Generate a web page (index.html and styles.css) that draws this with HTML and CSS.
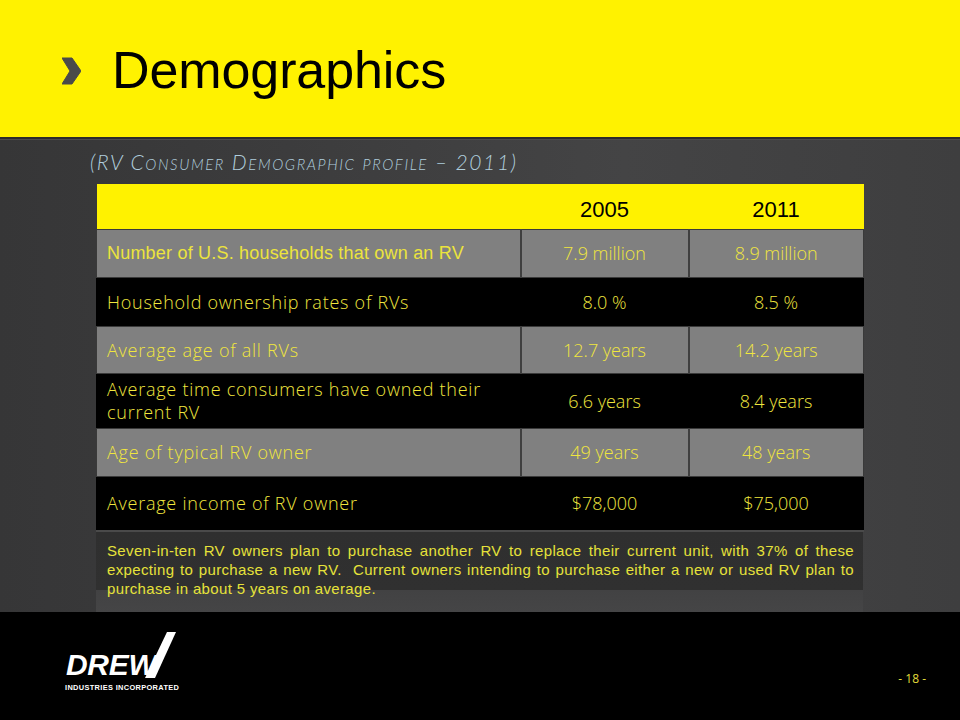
FILE: index.html
```html
<!DOCTYPE html>
<html lang="en">
<head>
<meta charset="utf-8">
<title>Demographics</title>
<link rel="stylesheet" href="styles.css">
</head>
<body>
<div class="slide">
  <header class="top">
    <svg class="chevron" width="19" height="28" viewBox="0 0 19 28" aria-hidden="true">
      <polygon points="0,1 10,1 19,14 10,27 0,27 8,14" fill="#4a4a4a" stroke="#4a4a4a" stroke-width="1" stroke-linejoin="round"/>
    </svg>
    <h1 class="title">Demographics</h1>
  </header>
  <main class="middle">
    <p class="subtitle">(RV Consumer Demographic profile – 2011)</p>
    <table class="data">
      <colgroup><col class="c1"><col class="c2"><col class="c3"></colgroup>
      <thead>
        <tr class="head"><th></th><th>2005</th><th>2011</th></tr>
      </thead>
      <tbody>
        <tr class="gray r1"><td class="label arial">Number of U.S. households that own an RV</td><td>7.9 million</td><td>8.9 million</td></tr>
        <tr class="black r2"><td class="label">Household ownership rates of RVs</td><td>8.0 %</td><td>8.5 %</td></tr>
        <tr class="gray r3"><td class="label">Average age of all RVs</td><td>12.7 years</td><td>14.2 years</td></tr>
        <tr class="black r4"><td class="label two">Average time consumers have owned their<br>current RV</td><td>6.6 years</td><td>8.4 years</td></tr>
        <tr class="gray r5"><td class="label">Age of typical RV owner</td><td>49 years</td><td>48 years</td></tr>
        <tr class="black r6"><td class="label">Average income of RV owner</td><td>$78,000</td><td>$75,000</td></tr>
      </tbody>
    </table>
    <div class="note">
      <p>Seven-in-ten RV owners plan to purchase another RV to replace their current unit, with 37% of these expecting to purchase a new RV.&nbsp; Current owners intending to purchase either a new or used RV plan to purchase in about 5 years on average.</p>
    </div>
  </main>
  <footer class="bottom">
    <div class="logo">
      <div class="drew">
        <span class="drew-text">DREW</span>
        <svg class="drew-stroke" width="36" height="48" viewBox="0 0 36 48" aria-hidden="true">
          <polygon points="26,0 35,0 14,46 4,46" fill="#ffffff"/>
        </svg>
      </div>
      <div class="inc">INDUSTRIES INCORPORATED</div>
    </div>
    <div class="page">- 18 -</div>
  </footer>
</div>
</body>
</html>
```

FILE: styles.css
```css
* { box-sizing: border-box; }
html, body { margin: 0; padding: 0; background: #000; }
body { font-family: "Liberation Sans", Arial, sans-serif; }

.slide {
  width: 960px;
  height: 720px;
  display: flex;
  flex-direction: column;
  overflow: hidden;
}

.top {
  height: 139px;
  flex: none;
  background: #fff200;
  border-bottom: 2px solid #2b2b2b;
  display: flex;
  align-items: center;
  padding: 0 0 0 62px;
}
.chevron { flex: none; margin-top: 4px; }
.title {
  margin: 0 0 0 31px;
  font-family: "Liberation Sans", Arial, sans-serif;
  font-weight: normal;
  font-size: 52px;
  color: #000;
  letter-spacing: -0.1px;
  line-height: 1;
  padding-top: 2px;
}

.middle {
  height: 473px;
  flex: none;
  background: linear-gradient(90deg, #363637 0%, #3c3c3d 30%, #444445 65%, #3e3e3f 100%);
  border-top: 1px solid #4c4c4c;
  padding: 9px 0 0 90px;
  display: flex;
  flex-direction: column;
}

.subtitle {
  margin: 0;
  font-family: Lato, "Open Sans", sans-serif;
  font-weight: 300;
  font-style: italic;
  font-variant: small-caps;
  font-size: 21px;
  line-height: 26px;
  letter-spacing: 1.6px;
  color: #b0cedd;
}

.data {
  margin: 9px 0 0 6px;
  width: 767px;
  border-collapse: collapse;
  table-layout: fixed;
}
.c1 { width: 424px; }
.c2 { width: 168px; }
.c3 { width: 175px; }

.data th, .data td {
  border: 1px solid #3a3a3a;
  padding: 0;
  text-align: center;
  vertical-align: middle;
}
.data .head th {
  background: #fff200;
  height: 45px;
  font-family: "Liberation Sans", Arial, sans-serif;
  font-weight: normal;
  font-size: 22px;
  color: #000;
  padding-top: 8px;
  border: 0;
  border-bottom: 1px solid #3a3a3a;
}

.data td {
  font-family: "Open Sans", sans-serif;
  font-weight: 300;
  font-size: 18px;
  color: #f0e63e;
}
.gray td { background: #808080; }
.black td { background: #000; border-left-color: #000; border-right-color: #000; }
.gray td { border-left: 2px solid #3f3f3f; }
.gray td:first-child { border-left: 1px solid #3a3a3a; }

.data td.label {
  text-align: left;
  padding-left: 10px;
  font-size: 18px;
  letter-spacing: 0.75px;
}
.data td.arial {
  font-family: "Liberation Sans", Arial, sans-serif;
  font-weight: normal;
  font-size: 18px;
  letter-spacing: 0.2px;
  color: #ece43c;
}
.data td.two { line-height: 23px; }

.r1 td { height: 48px; }
.r2 td { height: 49px; }
.r3 td { height: 47px; }
.r4 td { height: 55px; }
.r5 td { height: 48px; }
.r6 td { height: 55px; border-bottom: 2px solid #4a4a4a; }

.note {
  margin-left: 6px;
  width: 767px;
  height: 80px;
  background: linear-gradient(180deg, #2f2f2f 0px, #303030 58px, #424243 58px, #454546 80px);
  padding: 9px 9px 0 11px;
}
.note p {
  margin: 0;
  font-family: "Liberation Sans", Arial, sans-serif;
  font-size: 15px;
  line-height: 19px;
  letter-spacing: 0.35px;
  color: #e6e23a;
  text-align: justify;
}

.bottom {
  flex: 1;
  background: #000;
  display: flex;
  justify-content: space-between;
  align-items: flex-start;
  padding: 20px 34px 0 65px;
}

.logo { display: flex; flex-direction: column; width: 115px; }
.drew { position: relative; height: 52px; }
.drew-text {
  position: absolute;
  left: 1px;
  top: 18px;
  font-family: "Liberation Sans", Arial, sans-serif;
  font-weight: bold;
  font-style: italic;
  font-size: 30px;
  line-height: 1;
  letter-spacing: -0.3px;
  color: #fff;
}
.drew-stroke { position: absolute; left: 76px; top: 0; }
.inc {
  font-family: "Liberation Sans", Arial, sans-serif;
  font-weight: bold;
  font-size: 7.4px;
  letter-spacing: 0.35px;
  color: #fff;
  white-space: nowrap;
  line-height: 8px;
}

.page {
  margin-top: 38px;
  font-family: "Open Sans", sans-serif;
  font-size: 12px;
  color: #e2dc3a;
}
```
